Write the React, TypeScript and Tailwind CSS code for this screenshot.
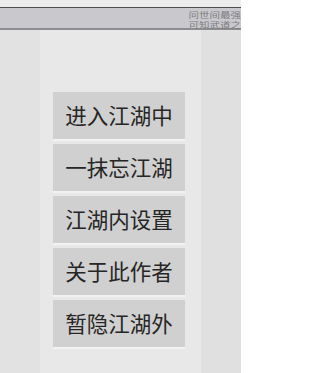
import React from "react";

const items = ["进入江湖中", "一抹忘江湖", "江湖内设置", "关于此作者", "暂隐江湖外"];

export default function App() {
  return (
    <div
      className="w-[241px] h-[373px] bg-[#e3e3e3] flex flex-col overflow-hidden"
      style={{ fontFamily: '"Noto Sans CJK SC", "Noto Sans", sans-serif' }}
    >
      <div className="h-[7px] bg-[#ececec]" />
      <div className="h-[23px] bg-[#c9c9cd] border-t border-t-[#4e4e52] border-b-2 border-b-[#8e8e92] flex flex-col items-end pt-[3px]">
        <span className="block h-[8px] text-[10.5px] leading-[8px] text-[#7c7c80] scale-y-[0.72]">问世间最强</span>
        <div className="h-[1px] w-[93px] my-[1px] bg-gradient-to-r from-transparent via-[#f4f4f4] to-[#f4f4f4]" />
        <span className="block h-[8px] text-[10.5px] leading-[8px] text-[#7c7c80] scale-y-[0.72]">可知武道之</span>
      </div>
      <div className="flex flex-1">
        <div className="w-[40px] bg-[#e2e2e2]" />
        <div className="w-[161px] bg-[#e8e8e8] pt-[62px] pl-[13px]">
          <div className="flex flex-col gap-[5px] w-[132px]">
            {items.map((t) => (
              <div
                key={t}
                className="h-[47px] bg-[#d0d0d0] flex items-center justify-center text-[21.5px] text-[#262626] shadow-[0_2px_0_#f2f2f2]"
              >
                {t}
              </div>
            ))}
          </div>
        </div>
        <div className="flex-1 bg-[#e0e0e0]" />
      </div>
    </div>
  );
}
